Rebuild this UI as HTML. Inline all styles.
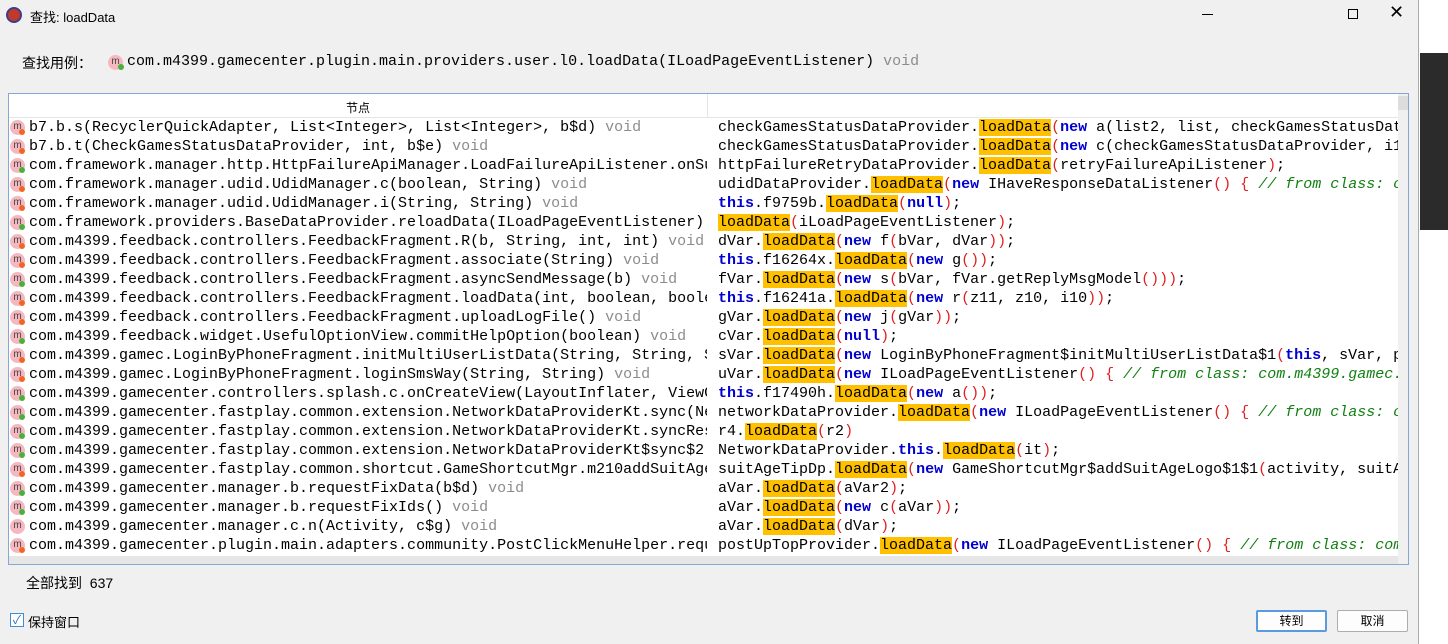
<!DOCTYPE html>
<html><head><meta charset="utf-8"><style>
*{margin:0;padding:0;box-sizing:border-box}
body{width:1448px;height:644px;overflow:hidden;background:#fff;position:relative;font-family:"Liberation Sans","Noto Sans CJK SC",sans-serif;}
.win{position:absolute;left:0;top:0;width:1419px;height:644px;background:#f0f0f0;border-right:1px solid #aaa}
.side{position:absolute;left:1420px;top:0;width:28px;height:644px;background:#fff}
.dark{position:absolute;left:1420px;top:53px;width:28px;height:177px;background:#2b2b2b}
.t{position:absolute;font-size:13px;color:#000}
.mono{font-family:"Liberation Mono",monospace;font-size:15px;white-space:pre}
.box{position:absolute;left:8px;top:93px;width:1401px;height:472px;border:1px solid #86a6d4;background:#fff;overflow:hidden}
.hdr{position:absolute;left:0;top:0;width:1389px;height:24px;border-bottom:1px solid #e5e5e5;font-size:12px}
.row{position:absolute;height:19px;line-height:19px;overflow:hidden}
.ic{position:absolute;left:1px;top:2px;width:15px;height:15px;border-radius:50%;background:#f5b8c0;font-size:10px;line-height:13px;text-align:center;color:#444;font-family:"Liberation Sans",sans-serif}
.dot{position:absolute;left:11px;top:11px;width:6px;height:6px;border-radius:50%}
.o{background:#f26522}.g{background:#4caf3c}
.v{color:#8c8c8c}
.h{background:#ffc000}
.k{color:#0000d0;font-weight:bold}
.p{color:#e02020}
.c{color:#108010;font-style:italic}
.btn{position:absolute;top:610px;width:71px;height:22px;border:1px solid #adadad;background:#fdfdfd;font-size:12px;text-align:center;line-height:20px;border-radius:2px}
</style></head><body>
<div class="win">
<div style="position:absolute;left:6px;top:7px;width:16px;height:16px;border-radius:50%;background:#c0392b;border:2px solid #3d3d8c"></div>
<div class="t" style="left:30px;top:7px">查找: loadData</div>
<div style="position:absolute;left:1202px;top:14px;width:11px;height:1px;background:#000"></div>
<div style="position:absolute;left:1348px;top:9px;width:10px;height:10px;border:1px solid #000"></div>
<div class="t" style="left:1389px;top:2px;font-size:18px;font-weight:300">✕</div>
<div class="t" style="left:22px;top:53px;font-size:14px">查找用例：</div>
<div style="position:absolute;left:108px;top:55px;width:15px;height:15px;border-radius:50%;background:#f5b8c0;font-size:10px;line-height:13px;text-align:center;color:#444">m<div class="dot g" style="left:10px;top:9px"></div></div>
<div class="t mono" style="left:127px;top:53px">com.m4399.gamecenter.plugin.main.providers.user.l0.loadData(ILoadPageEventListener) <span class="v">void</span></div>

<div class="box">
<div class="hdr"><div style="position:absolute;left:698px;top:0;width:1px;height:24px;background:#e5e5e5"></div><div style="position:absolute;left:337px;top:5px">节点</div></div>
<div style="position:absolute;left:1389px;top:0;width:11px;height:472px;background:#f0f0f0"><div style="position:absolute;left:0;top:2px;width:10px;height:14px;background:#ddd"></div></div>
<div style="position:absolute;left:0;top:462px;width:1389px;height:10px;background:#e6e6e6"></div>
<div id="L"></div>
</div>

<div class="t" style="left:26px;top:573px;font-size:14px">全部找到 &nbsp;637</div>
<div style="position:absolute;left:10px;top:613px;width:14px;height:14px;border:1px solid #3c8ce0;background:#fff;color:#2a6fc0;font-size:12px;line-height:12px;text-align:center">✓</div>
<div class="t" style="left:28px;top:612px">保持窗口</div>
<div class="btn" style="left:1256px;border:2px solid #5a9be0;line-height:18px">转到</div>
<div class="btn" style="left:1337px">取消</div>
</div>
<div class="side"></div><div class="dark"></div>
<script>
var L=[
["o","b7.b.s(RecyclerQuickAdapter, List&lt;Integer&gt;, List&lt;Integer&gt;, b$d) <span class=v>void</span>"],
["o","b7.b.t(CheckGamesStatusDataProvider, int, b$e) <span class=v>void</span>"],
["g","com.framework.manager.http.HttpFailureApiManager.LoadFailureApiListener.onSuccess()"],
["o","com.framework.manager.udid.UdidManager.c(boolean, String) <span class=v>void</span>"],
["o","com.framework.manager.udid.UdidManager.i(String, String) <span class=v>void</span>"],
["g","com.framework.providers.BaseDataProvider.reloadData(ILoadPageEventListener) void"],
["o","com.m4399.feedback.controllers.FeedbackFragment.R(b, String, int, int) <span class=v>void</span>"],
["o","com.m4399.feedback.controllers.FeedbackFragment.associate(String) <span class=v>void</span>"],
["g","com.m4399.feedback.controllers.FeedbackFragment.asyncSendMessage(b) <span class=v>void</span>"],
["o","com.m4399.feedback.controllers.FeedbackFragment.loadData(int, boolean, boolean)"],
["o","com.m4399.feedback.controllers.FeedbackFragment.uploadLogFile() <span class=v>void</span>"],
["g","com.m4399.feedback.widget.UsefulOptionView.commitHelpOption(boolean) <span class=v>void</span>"],
["o","com.m4399.gamec.LoginByPhoneFragment.initMultiUserListData(String, String, String)"],
["o","com.m4399.gamec.LoginByPhoneFragment.loginSmsWay(String, String) <span class=v>void</span>"],
["g","com.m4399.gamecenter.controllers.splash.c.onCreateView(LayoutInflater, ViewGroup)"],
["g","com.m4399.gamecenter.fastplay.common.extension.NetworkDataProviderKt.sync(Net)"],
["g","com.m4399.gamecenter.fastplay.common.extension.NetworkDataProviderKt.syncResult"],
["g","com.m4399.gamecenter.fastplay.common.extension.NetworkDataProviderKt$sync$2.x"],
["o","com.m4399.gamecenter.fastplay.common.shortcut.GameShortcutMgr.m210addSuitAgeLogo"],
["g","com.m4399.gamecenter.manager.b.requestFixData(b$d) <span class=v>void</span>"],
["g","com.m4399.gamecenter.manager.b.requestFixIds() <span class=v>void</span>"],
["","com.m4399.gamecenter.manager.c.n(Activity, c$g) <span class=v>void</span>"],
["o","com.m4399.gamecenter.plugin.main.adapters.community.PostClickMenuHelper.request"]];
function h(s){return '<span class=h>'+s+'</span>'}
var H=h('loadData'),N='<span class=k>new</span>',T='<span class=k>this</span>',P=function(x){return '<span class=p>'+x+'</span>'};
var CM=function(s){return P('{')+' <span class=c>// from class: '+s+'</span>'};
var R=[
"checkGamesStatusDataProvider."+H+P('(')+N+" a(list2, list, checkGamesStatusDataProvider",
"checkGamesStatusDataProvider."+H+P('(')+N+" c(checkGamesStatusDataProvider, i10",
"httpFailureRetryDataProvider."+H+P('(')+"retryFailureApiListener"+P(')')+";",
"udidDataProvider."+H+P('(')+N+" IHaveResponseDataListener"+P('()')+" "+CM("com.framework"),
T+".f9759b."+H+P('(')+"<span class=k>null</span>"+P(')')+";",
H+P('(')+"iLoadPageEventListener"+P(')')+";",
"dVar."+H+P('(')+N+" f"+P('(')+"bVar, dVar"+P('))')+";",
T+".f16264x."+H+P('(')+N+" g"+P('())')+";",
"fVar."+H+P('(')+N+" s"+P('(')+"bVar, fVar.getReplyMsgModel"+P('()))')+";",
T+".f16241a."+H+P('(')+N+" r"+P('(')+"z11, z10, i10"+P('))')+";",
"gVar."+H+P('(')+N+" j"+P('(')+"gVar"+P('))')+";",
"cVar."+H+P('(')+"<span class=k>null</span>"+P(')')+";",
"sVar."+H+P('(')+N+" LoginByPhoneFragment$initMultiUserListData$1"+P('(')+T+", sVar, p",
"uVar."+H+P('(')+N+" ILoadPageEventListener"+P('()')+" "+CM("com.m4399.gamec.xx"),
T+".f17490h."+H+P('(')+N+" a"+P('())')+";",
"networkDataProvider."+H+P('(')+N+" ILoadPageEventListener"+P('()')+" "+CM("com"),
"r4."+H+P('(')+"r2"+P(')'),
"NetworkDataProvider."+T+"."+H+P('(')+"it"+P(')')+";",
"suitAgeTipDp."+H+P('(')+N+" GameShortcutMgr$addSuitAgeLogo$1$1"+P('(')+"activity, suitAge",
"aVar."+H+P('(')+"aVar2"+P(')')+";",
"aVar."+H+P('(')+N+" c"+P('(')+"aVar"+P('))')+";",
"aVar."+H+P('(')+"dVar"+P(')')+";",
"postUpTopProvider."+H+P('(')+N+" ILoadPageEventListener"+P('()')+" "+CM("com.m4399")];
var o='';
for(var i=0;i<23;i++){var y=24+i*19;
o+='<div class="row" style="left:0;top:'+y+'px;width:698px"><div class=ic>m'+(L[i][0]?'<div class="dot '+L[i][0]+'" style="left:9px;top:9px"></div>':'')+'</div><div class=mono style="position:absolute;left:20px;top:0">'+L[i][1]+'</div></div>';
o+='<div class="row mono" style="left:709px;top:'+y+'px;width:680px">'+R[i]+'</div>';}
document.getElementById('L').innerHTML=o;
</script>
</body></html>
